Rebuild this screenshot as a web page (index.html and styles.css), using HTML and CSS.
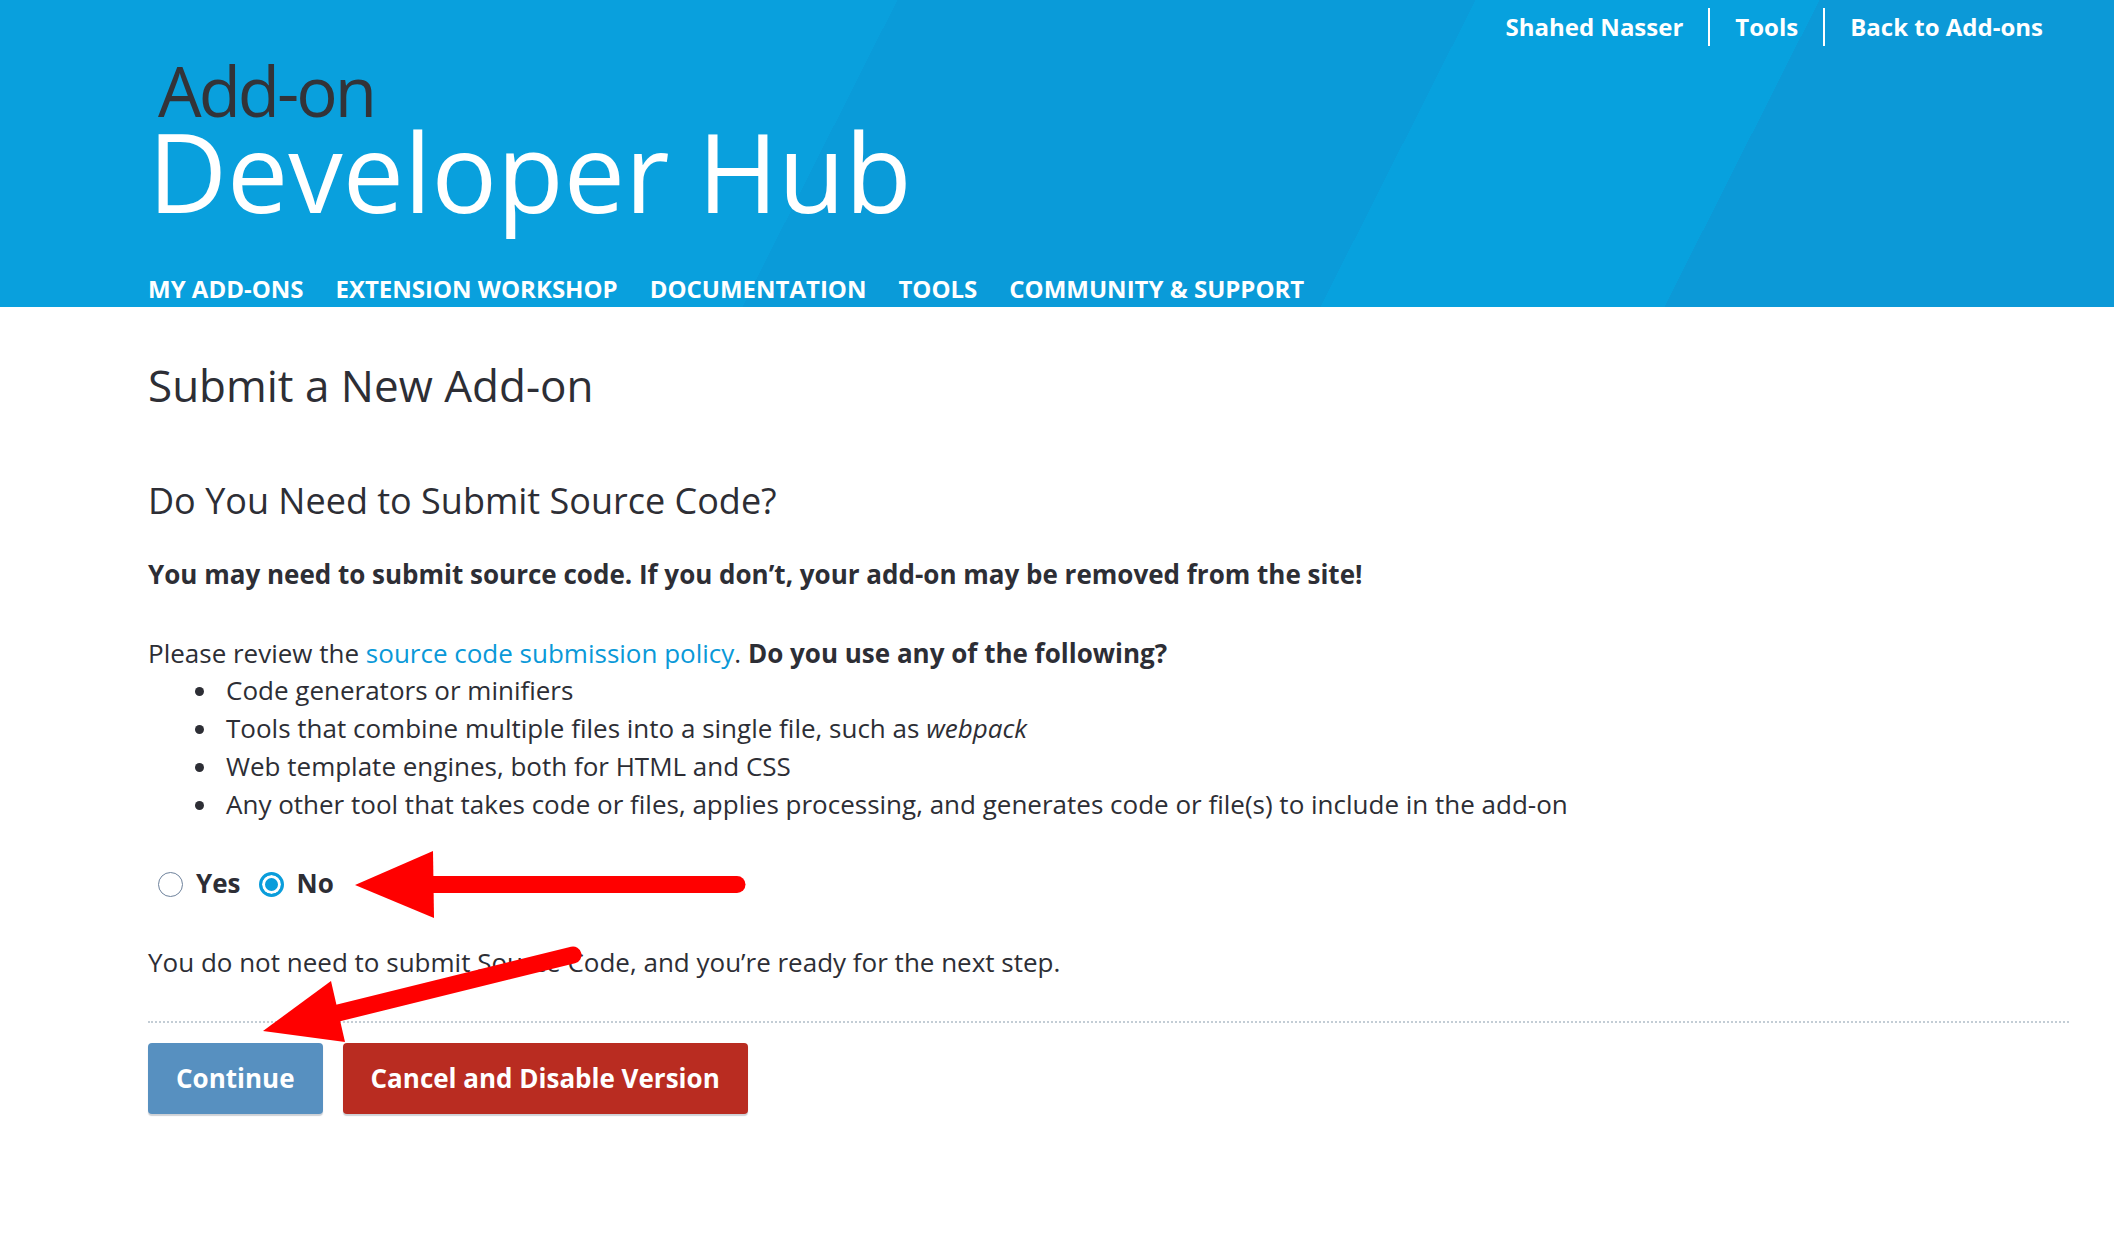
FILE: index.html
```html
<!DOCTYPE html>
<html lang="en">
<head>
<meta charset="utf-8">
<title>Submit a New Add-on :: Developer Hub</title>
<link rel="stylesheet" href="styles.css">
</head>
<body>
<header class="site-header">
  <nav class="aux-nav">
    <a class="aux-link" href="#">Shahed Nasser</a>
    <a class="aux-link sep" href="#">Tools</a>
    <a class="aux-link sep" href="#">Back to Add-ons</a>
  </nav>
  <a class="logo" href="#">
    <span class="logo-small">Add-on</span>
    <span class="logo-big">Developer Hub</span>
  </a>
  <nav class="main-nav">
    <a href="#">My Add-ons</a>
    <a href="#">Extension Workshop</a>
    <a href="#">Documentation</a>
    <a href="#">Tools</a>
    <a href="#">Community &amp; Support</a>
  </nav>
</header>

<main class="content">
  <h1 class="page-title">Submit a New Add-on</h1>
  <h2 class="section-title">Do You Need to Submit Source Code?</h2>
  <p class="warning">You may need to submit source code. If you don’t, your add-on may be removed from the site!</p>
  <p class="intro">Please review the <a href="#" class="link">source code submission policy</a>. <strong>Do you use any of the following?</strong></p>
  <ul class="tool-list">
    <li>Code generators or minifiers</li>
    <li>Tools that combine multiple files into a single file, such as <em>webpack</em></li>
    <li>Web template engines, both for HTML and CSS</li>
    <li>Any other tool that takes code or files, applies processing, and generates code or file(s) to include in the add-on</li>
  </ul>
  <div class="choices">
    <label class="choice"><input type="radio" name="has_source" value="yes"><span>Yes</span></label>
    <label class="choice"><input type="radio" name="has_source" value="no" checked><span>No</span></label>
  </div>
  <p class="note">You do not need to submit Source Code, and you’re ready for the next step.</p>
  <div class="actions">
    <button class="btn btn-continue" type="button">Continue</button>
    <button class="btn btn-cancel" type="button">Cancel and Disable Version</button>
  </div>
</main>

<svg class="annotations" width="2114" height="1242" viewBox="0 0 2114 1242" aria-hidden="true">
  <line x1="428" y1="884.5" x2="737" y2="884.5" stroke="#ff0000" stroke-width="17" stroke-linecap="round"/>
  <polygon points="355,885 433,851 434,918" fill="#ff0000"/>
  <line x1="573" y1="955" x2="330" y2="1015" stroke="#ff0000" stroke-width="17" stroke-linecap="round"/>
  <polygon points="263,1031 331,981 345,1042" fill="#ff0000"/>
</svg>
</body>
</html>
```

FILE: styles.css
```css
* { box-sizing: border-box; }

html, body {
  margin: 0;
  padding: 0;
  background: #ffffff;
}

body {
  position: relative;
  font-family: "Open Sans", "Noto Sans", "Liberation Sans", sans-serif;
  font-size: 26px;
  line-height: 37.7px;
  color: #2d2e35;
  min-height: 1242px;
}

a { text-decoration: none; }

/* ---------- header ---------- */
.site-header {
  height: 307px;
  padding: 0 0 0 148px;
  display: flex;
  flex-direction: column;
  background: linear-gradient(116.8deg,
    #09a0dd 0px, #09a0dd 801px,
    #0a9bd9 801px, #0a9bd9 1317px,
    #07a1de 1317px, #07a1de 1624px,
    #0c99d7 1624px);
}

.aux-nav {
  display: flex;
  justify-content: flex-end;
  padding: 8px 71px 0 0;
  height: 46px;
}

.aux-link {
  display: block;
  color: #ffffff;
  font-weight: 700;
  font-size: 24px;
  line-height: 38px;
  height: 38px;
  padding: 0 25px;
}

.aux-link:last-child { padding-right: 0; }

.aux-link.sep { border-left: 2px solid #ffffff; }

.logo {
  display: flex;
  flex-direction: column;
  align-self: flex-start;
  margin-top: 13px;
}

.logo-small {
  font-size: 69px;
  line-height: 62px;
  color: #333338;
  letter-spacing: -3px;
  padding-left: 10px;
}

.logo-big {
  font-size: 109px;
  line-height: 100px;
  color: #ffffff;
}

.main-nav {
  display: flex;
  gap: 32px;
  margin-top: 50px;
}

.main-nav a {
  color: #ffffff;
  font-weight: 700;
  font-size: 24px;
  line-height: 36px;
  text-transform: uppercase;
}

/* ---------- content ---------- */
.content {
  padding: 0 45px 0 148px;
}

.page-title {
  margin: 53px 0 0;
  font-size: 44px;
  line-height: 50px;
  font-weight: 400;
  color: #2d2e35;
}

.section-title {
  margin: 71px 0 0;
  font-size: 36px;
  line-height: 40px;
  font-weight: 400;
  color: #2d2e35;
}

.warning {
  margin: 35px 0 0;
  font-weight: 700;
}

.intro {
  margin: 41px 0 0;
}

.intro strong { font-weight: 700; }

.link { color: #0a99d8; }

.tool-list {
  margin: 0;
  padding: 0 0 0 78px;
  list-style: none;
}

.tool-list li::before {
  content: "";
  display: inline-block;
  width: 9px;
  height: 9px;
  border-radius: 50%;
  background: #2d2e35;
  margin: 0 22px 0 -31px;
  vertical-align: 4px;
}

.choices {
  display: flex;
  align-items: center;
  gap: 18px;
  margin-top: 42px;
  padding-left: 10px;
  font-size: 26px;
  font-weight: 700;
  line-height: 37.7px;
}

.choice {
  display: flex;
  align-items: center;
  gap: 13px;
}

.choice input {
  appearance: none;
  -webkit-appearance: none;
  margin: 0;
  width: 25px;
  height: 25px;
  border-radius: 50%;
  border: 1.5px solid #6e829c;
  background: #ffffff;
}

.choice input:checked {
  border: 3px solid #0a9ddb;
  background: #0a9ddb;
  box-shadow: inset 0 0 0 3px #ffffff;
}

.note {
  margin: 41px 0 0;
}

.actions {
  margin-top: 39px;
  padding-top: 20px;
  border-top: 2px dotted #c3cdd5;
  display: flex;
  gap: 20px;
}

.btn {
  height: 71px;
  padding: 0 28px;
  border: 0;
  border-radius: 4px;
  font-family: "Open Sans", "Noto Sans", "Liberation Sans", sans-serif;
  font-size: 26px;
  font-weight: 700;
  color: #ffffff;
  box-shadow: 0 2px 1px rgba(60, 70, 90, 0.25);
}

.btn-continue { background: #5790c0; }
.btn-cancel { background: #b92c21; }

/* ---------- annotation overlay ---------- */
.annotations {
  position: absolute;
  left: 0;
  top: 0;
  pointer-events: none;
}
```
